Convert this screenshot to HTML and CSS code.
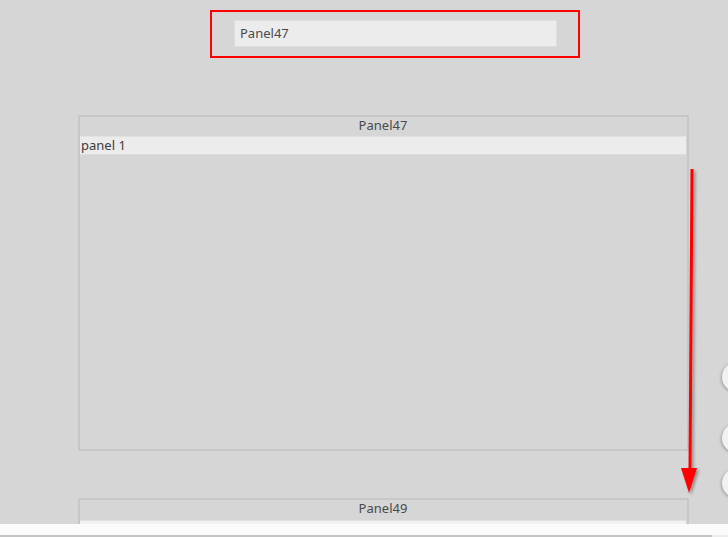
FILE: index.html
```html
<!DOCTYPE html>
<html>
<head>
<meta charset="utf-8">
<link rel="stylesheet" href="styles.css">
</head>
<body>
<div class="page">
  <div class="top-box">
    <div class="field">Panel47</div>
  </div>
  <div class="panel panel-a">
    <div class="panel-title">Panel47</div>
    <div class="row">panel 1</div>
  </div>
  <div class="panel panel-b">
    <div class="panel-title">Panel49</div>
    <div class="row row-white"></div>
  </div>
</div>
<div class="hscroll"><div class="thumb"></div></div>

<div class="knob k1"></div>
<div class="knob k2"></div>
<div class="knob k3"></div>

<svg class="arrow" width="40" height="340" viewBox="0 0 40 340">
  <defs>
    <filter id="sh" x="-50%" y="-10%" width="200%" height="120%">
      <feDropShadow dx="2" dy="2" stdDeviation="1.5" flood-color="#000" flood-opacity="0.35"/>
    </filter>
  </defs>
  <g filter="url(#sh)">
    <polygon points="10.5,0 13.5,0 11.5,300 8.5,300" fill="#ff0000"/>
    <polygon points="1,299 17,299 9,324" fill="#ff0000"/>
  </g>
</svg>
</body>
</html>
```

FILE: styles.css
```css
html, body {
  margin: 0;
  padding: 0;
}
body {
  width: 728px;
  height: 537px;
  overflow: hidden;
  background: #d6d6d6;
  font-family: "Noto Sans", "Open Sans", sans-serif;
  font-size: 13px;
  color: #444;
  position: relative;
}
.page {
  height: 524px;
  overflow: hidden;
  padding-top: 10px;
  box-sizing: border-box;
}
.top-box {
  margin-left: 210px;
  width: 370px;
  height: 48px;
  border: 2px solid #ff0000;
  box-sizing: border-box;
  padding: 8px 0 0 22px;
}
.field {
  width: 323px;
  height: 27px;
  box-sizing: border-box;
  background: #ececec;
  border: 1px solid #dedede;
  padding-left: 5px;
  line-height: 25px;
  color: #4a4a4a;
}
.panel {
  margin-left: 78px;
  width: 611px;
  box-sizing: border-box;
  border: 2px solid #c7c7c7;
  padding-right: 1px;
}
.panel-a {
  margin-top: 57px;
  height: 336px;
}
.panel-b {
  margin-top: 47px;
  height: 60px;
}
.panel-title {
  height: 19px;
  line-height: 16px;
  text-align: center;
  color: #4a4a4a;
}
.panel-b .panel-title {
  height: 20px;
  line-height: 16px;
}
.row {
  height: 19px;
  box-sizing: border-box;
  background: #ececec;
  border-bottom: 1px solid #dcdcdc;
  border-top: 1px solid #e2e2e2;
  line-height: 17px;
  padding-left: 1px;
  color: #3c3c3c;
}
.row-white {
  background: #f1f1f1;
}
.hscroll {
  height: 13px;
  background: #fbfbfb;
  position: relative;
}
.thumb {
  position: absolute;
  left: 0;
  bottom: 0;
  width: 712px;
  height: 2px;
  background: #c4c4c4;
}
.hscroll::after {
  content: "";
  position: absolute;
  right: 0;
  bottom: 0;
  width: 16px;
  height: 2px;
  background: #ececec;
}
.knob {
  position: absolute;
  left: 722px;
  width: 30px;
  height: 30px;
  border-radius: 50%;
  background: #f1f1f1;
  box-shadow: -1px 1px 3px rgba(0,0,0,0.25);
}
.k1 { top: 362px; }
.k2 { top: 423px; }
.k3 { top: 468px; }
.arrow {
  position: absolute;
  left: 680px;
  top: 169px;
  overflow: visible;
}
```
